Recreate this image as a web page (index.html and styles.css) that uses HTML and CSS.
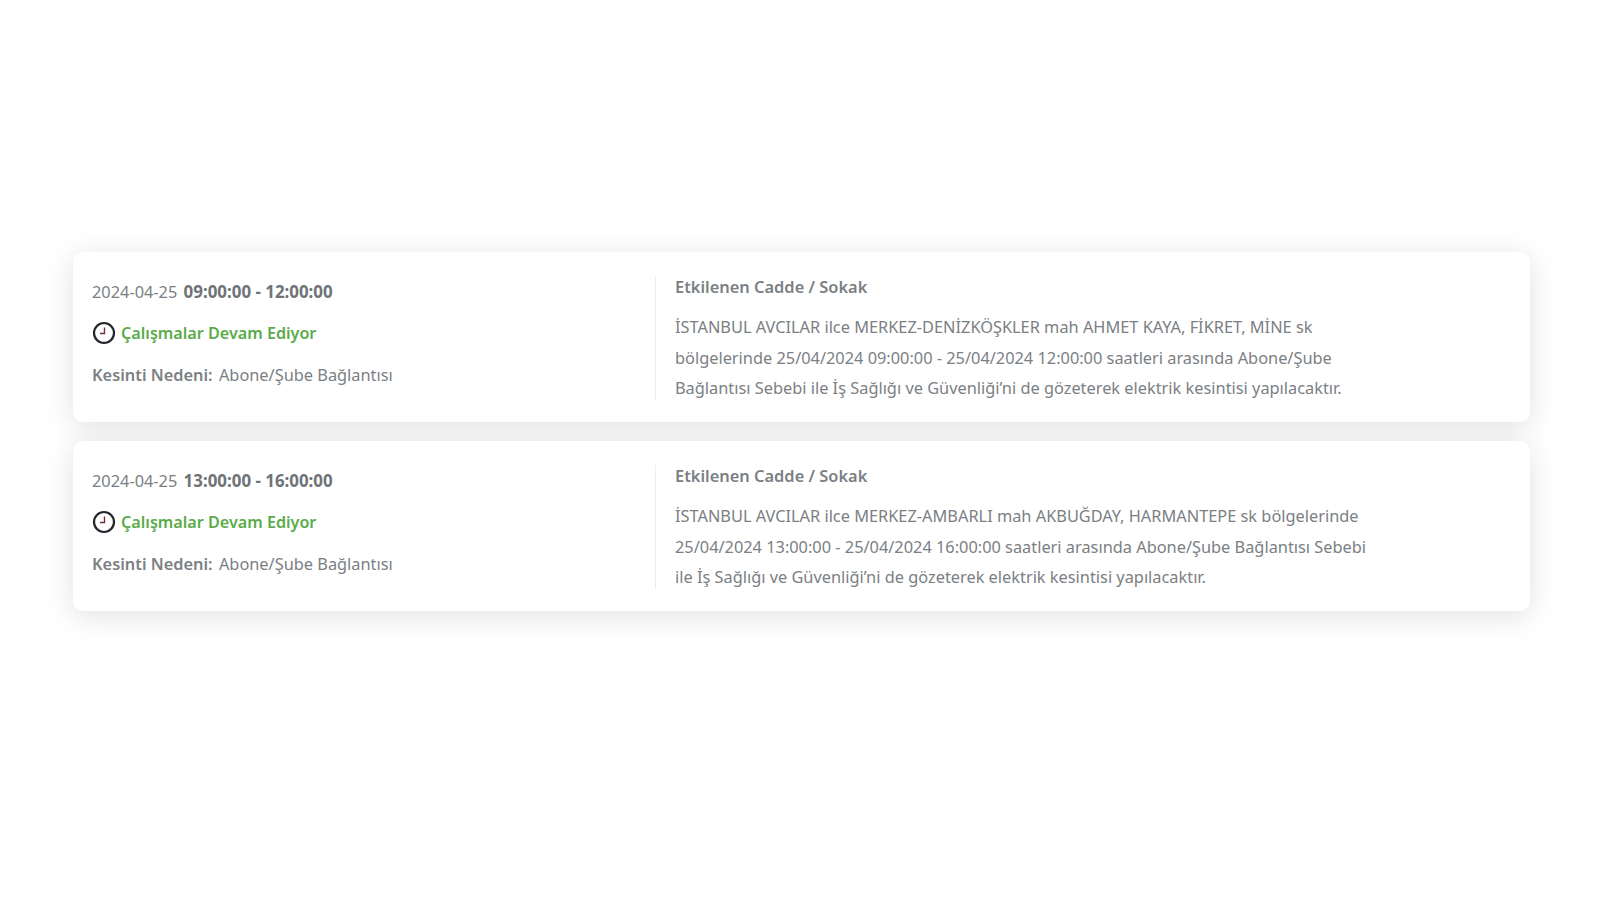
FILE: index.html
```html
<!doctype html>
<html>
<head>
<meta charset="utf-8">
<title>Kesinti</title>
<link rel="stylesheet" href="styles.css">
</head>
<body>
<div class="outage-list">
  <div class="outage-card">
    <div class="outage-info">
      <div class="outage-date">2024-04-25 <b>09:00:00 - 12:00:00</b></div>
      <div class="outage-status">
        <svg class="clock" viewBox="0 0 24 24"><circle cx="12" cy="12" r="10"/><path d="M12.5 6.5V12.5H8"/></svg>
        <span>Çalışmalar Devam Ediyor</span>
      </div>
      <div class="outage-reason"><b>Kesinti Nedeni:</b> Abone/Şube Bağlantısı</div>
    </div>
    <div class="outage-detail">
      <h4>Etkilenen Cadde / Sokak</h4>
      <p>İSTANBUL AVCILAR ilce MERKEZ-DENİZKÖŞKLER mah AHMET KAYA, FİKRET, MİNE sk<br>bölgelerinde 25/04/2024 09:00:00 - 25/04/2024 12:00:00 saatleri arasında Abone/Şube<br>Bağlantısı Sebebi ile İş Sağlığı ve Güvenliği’ni de gözeterek elektrik kesintisi yapılacaktır.</p>
    </div>
  </div>
  <div class="outage-card">
    <div class="outage-info">
      <div class="outage-date">2024-04-25 <b>13:00:00 - 16:00:00</b></div>
      <div class="outage-status">
        <svg class="clock" viewBox="0 0 24 24"><circle cx="12" cy="12" r="10"/><path d="M12.5 6.5V12.5H8"/></svg>
        <span>Çalışmalar Devam Ediyor</span>
      </div>
      <div class="outage-reason"><b>Kesinti Nedeni:</b> Abone/Şube Bağlantısı</div>
    </div>
    <div class="outage-detail">
      <h4>Etkilenen Cadde / Sokak</h4>
      <p>İSTANBUL AVCILAR ilce MERKEZ-AMBARLI mah AKBUĞDAY, HARMANTEPE sk bölgelerinde<br>25/04/2024 13:00:00 - 25/04/2024 16:00:00 saatleri arasında Abone/Şube Bağlantısı Sebebi<br>ile İş Sağlığı ve Güvenliği’ni de gözeterek elektrik kesintisi yapılacaktır.</p>
    </div>
  </div>
</div>
</body>
</html>
```

FILE: styles.css
```css
body {
  margin: 0;
  background: #fff;
  color: #7b8084;
  font-family: "Noto Sans", sans-serif;
  font-size: 16.35px;
}
b {
  font-weight: 600;
}
.outage-list {
  display: flex;
  flex-direction: column;
  gap: 19px;
  padding: 252px 70px 120px 73px;
}
.outage-card {
  display: flex;
  height: 170px;
  box-sizing: border-box;
  padding: 24px 0 22px 19px;
  background: #fff;
  border-radius: 10px;
  box-shadow: 0 5px 30px rgba(0, 0, 0, 0.12);
}
.outage-info {
  width: 563px;
  border-right: 1px solid #eee;
}
.outage-date {
  margin-top: 5px;
  line-height: 22px;
}
.outage-date b {
  margin-left: 2px;
  font-weight: 700;
  font-size: 16.9px;
  color: #6f7478;
}
.outage-status {
  display: flex;
  align-items: center;
  gap: 5px;
  margin-top: 18px;
  color: #5aab4a;
  font-size: 16.15px;
  font-weight: 600;
  line-height: 22px;
}
.clock {
  width: 24px;
  height: 24px;
  fill: #fff;
  stroke: #23262b;
  stroke-width: 2.2;
}
.clock path {
  fill: none;
  stroke: #7a2b3a;
  stroke-width: 1.4;
}
.outage-reason {
  margin-top: 19px;
  line-height: 22px;
}
.outage-reason b {
  margin-right: 2px;
}
.outage-detail {
  padding-left: 19px;
}
.outage-detail h4 {
  margin: 0;
  font-size: 16.4px;
  font-weight: 600;
  line-height: 22px;
}
.outage-detail p {
  margin: 14px 0 0;
  line-height: 30.6px;
}
```
